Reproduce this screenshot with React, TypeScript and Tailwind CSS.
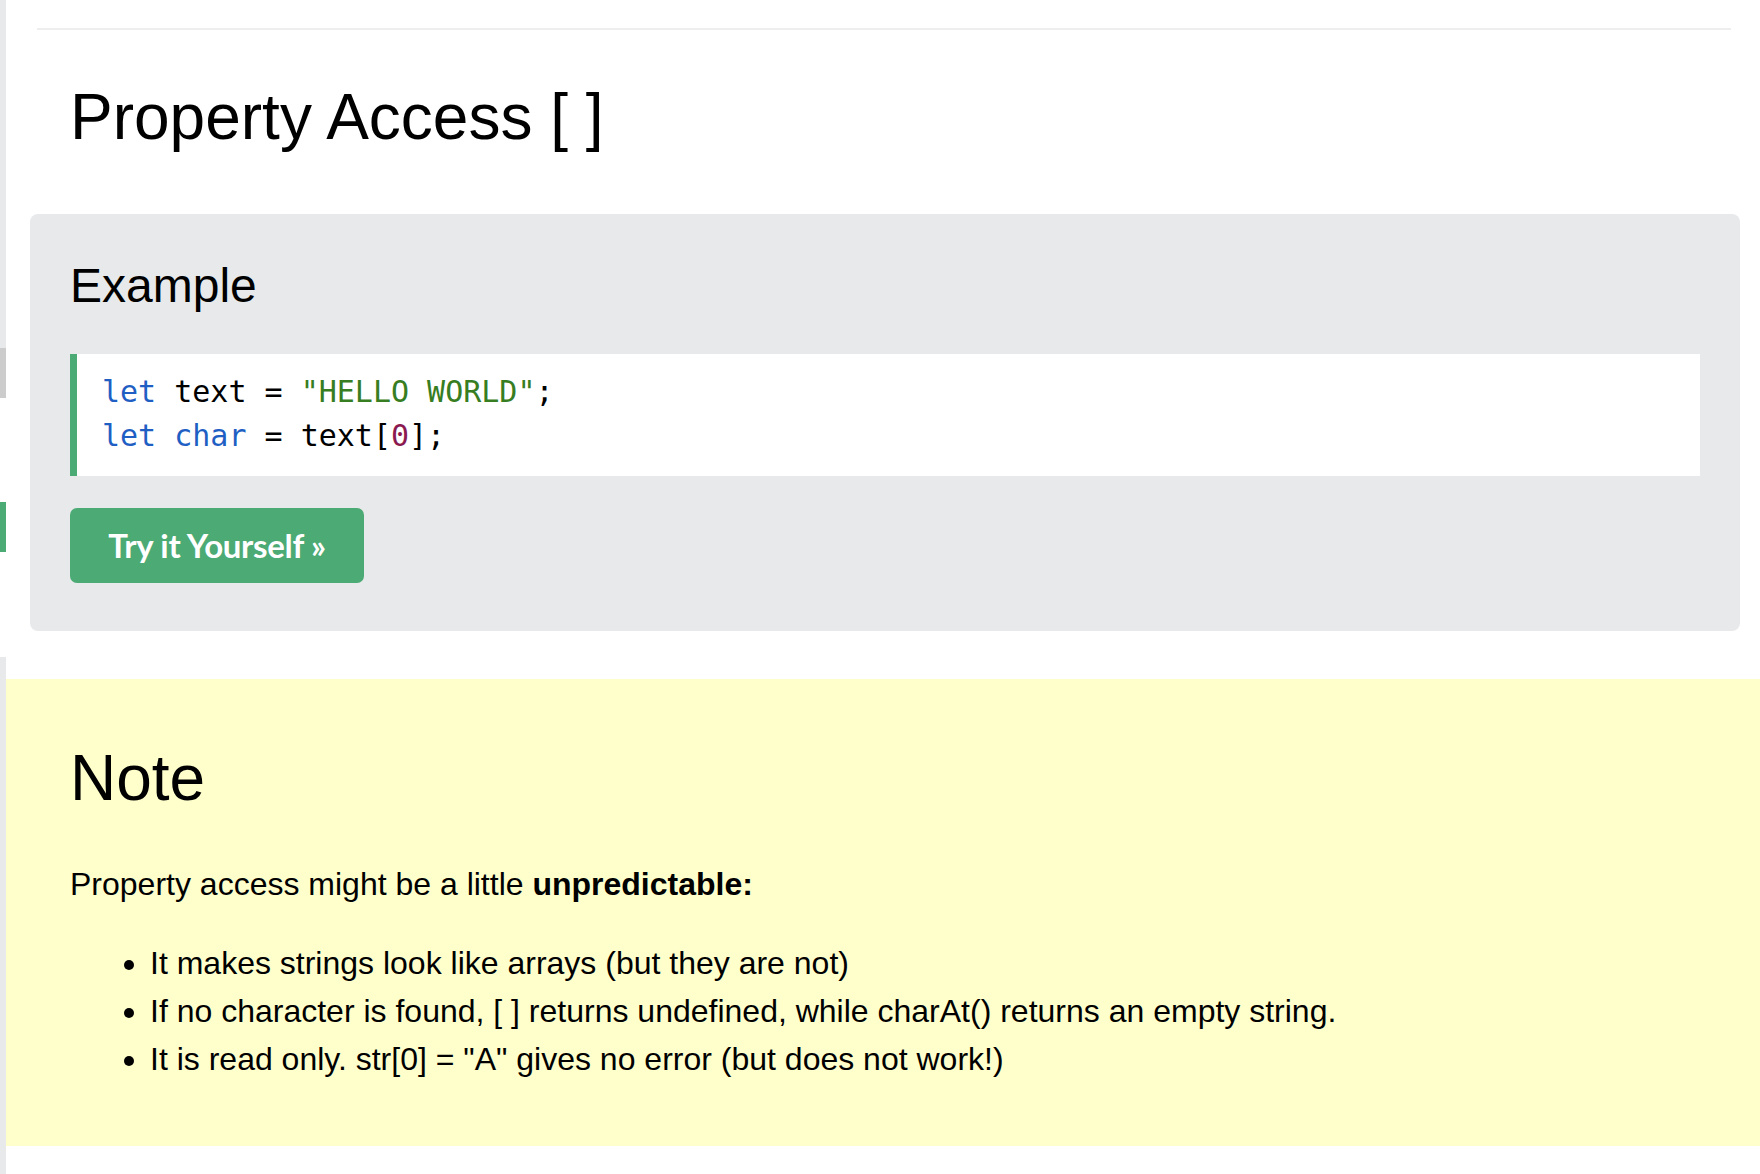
export default function App() {
  const bullets = [
    'It makes strings look like arrays (but they are not)',
    'If no character is found, [ ] returns undefined, while charAt() returns an empty string.',
    'It is read only. str[0] = "A" gives no error (but does not work!)',
  ]

  return (
    <div className="flex min-h-[1174px] bg-white text-black font-['Liberation_Sans',Arial,sans-serif]">
      {/* sliver of the left navigation */}
      <div className="flex w-[6px] shrink-0 flex-col">
        <div className="h-[348px] bg-[#e7e9eb]" />
        <div className="h-[50px] bg-[#cccccc]" />
        <div className="h-[104px] bg-white" />
        <div className="h-[50px] bg-[#4caa74]" />
        <div className="h-[105px] bg-white" />
        <div className="flex-1 bg-[#e7e9eb]" />
      </div>

      <main className="flex-1">
        <div className="pl-[24px] pr-[20px]">
          <hr className="mt-[28px] ml-[7px] mr-[9px] h-[2px] border-0 bg-[#eeeeee]" />

          <h1 className="mt-[51px] pl-[40px] text-[64px] leading-[72px] font-normal">
            Property Access [ ]
          </h1>

          <div className="mt-[61px] rounded-[8px] bg-[#e7e9eb] px-[40px] pt-[44px] pb-[48px]">
            <h2 className="text-[48px] leading-[56px] font-normal">Example</h2>

            <div className="mt-[40px] border-l-[7px] border-[#4caa74] bg-white pl-[25px] pt-[16px] pb-[18px] font-['DejaVu_Sans_Mono',monospace] text-[30px] leading-[44px]">
              <div>
                <span className="text-[#1f5fc4]">let</span> text ={' '}
                <span className="text-[#377d22]">"HELLO WORLD"</span>;
              </div>
              <div>
                <span className="text-[#1f5fc4]">let</span>{' '}
                <span className="text-[#1f5fc4]">char</span> = text[
                <span className="text-[#8b1a50]">0</span>];
              </div>
            </div>

            <button className="mt-[32px] flex h-[75px] w-[294px] items-center justify-center rounded-[7px] bg-[#4caa74] font-['Lato',sans-serif] text-[33px] font-bold tracking-[-0.3px] text-white">
              Try it Yourself »
            </button>
          </div>
        </div>

        <section className="mt-[48px] h-[467px] bg-[#ffffcc] pl-[64px] pt-[63px]">
          <h2 className="text-[64px] leading-[72px] font-normal">Note</h2>
          <p className="mt-[46px] text-[32px] leading-[48px]">
            Property access might be a little <b>unpredictable:</b>
          </p>
          <ul className="mt-[31px] list-disc pl-[80px] text-[32px] leading-[48px]">
            {bullets.map((b) => (
              <li key={b}>{b}</li>
            ))}
          </ul>
        </section>
      </main>
    </div>
  )
}
